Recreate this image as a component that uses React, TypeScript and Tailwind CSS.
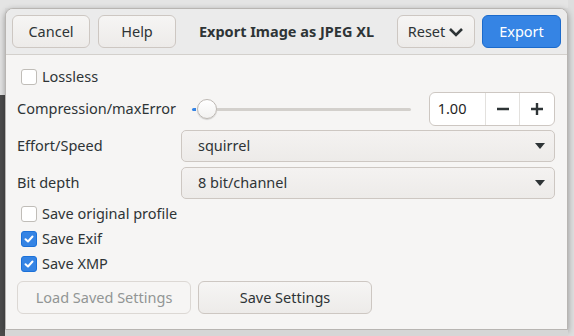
import React from 'react';

const font = { fontFamily: '"Noto Sans", "Open Sans", sans-serif' };

const Check: React.FC<{ checked?: boolean; label: string }> = ({ checked, label }) => (
    <div className="flex items-center h-5 pl-[4px] gap-[5px]">
        {checked ? (
            <span className="w-4 h-4 rounded-[3px] bg-[#3584e4] border border-[#1c71d8] flex items-center justify-center">
                <svg width="12" height="12" viewBox="0 0 12 12">
                    <path d="M2.5 6.2 L5 8.5 L9.5 3.5" fill="none" stroke="#fff" strokeWidth="2" strokeLinecap="round" strokeLinejoin="round" />
                </svg>
            </span>
        ) : (
            <span className="w-4 h-4 rounded-[3px] bg-white border border-[#c0bdb8]" />
        )}
        <span className="text-[#2e3436]">{label}</span>
    </div>
);

const Combo: React.FC<{ value: string }> = ({ value }) => (
    <div className="flex-1 h-8 rounded-[5px] border border-[#cdc7c2] bg-gradient-to-b from-[#f4f2f1] to-[#edebe9] flex items-center justify-between pl-4 pr-[9px]">
        <span className="text-[#2e3436]">{value}</span>
        <svg width="10" height="6" viewBox="0 0 10 6">
            <path d="M0 0 H10 L5 6 Z" fill="#2e3436" />
        </svg>
    </div>
);

const btn = 'h-[33px] rounded-[6px] border border-[#cdc7c2] bg-gradient-to-b from-[#f6f5f4] to-[#edebe9] text-[#2e3436] flex items-center justify-center';

export default function App() {
    return (
        <div className="w-[574px] h-[336px] bg-[#dedede] flex overflow-hidden text-[14.5px]" style={font}>
            <div className="w-[5px] flex flex-col">
                <div className="h-[95px] bg-[#e4e4e4]" />
                <div className="flex-1 bg-[#4c4c4c]" />
            </div>
            <div className="flex flex-col">
                <div className="h-2 bg-[#e4e4e4]" />
                <div className="w-[563px] h-[322px] rounded-t-[8px] border border-[#b8b5b2] bg-[#f6f5f4] shadow-[0_2px_6px_rgba(0,0,0,0.35)] flex flex-col overflow-hidden">
                    <header className="h-[46px] shrink-0 bg-[#ebebeb] border-b border-[#d3d0cc] flex items-center px-[6px]">
                        <button className={`${btn} w-[78px]`}>Cancel</button>
                        <button className={`${btn} w-[78px] ml-2`}>Help</button>
                        <div className="flex-1 text-center font-bold text-[#2e3436]">Export Image as JPEG XL</div>
                        <button className={`${btn} w-[78px] gap-[3px]`}>
                            Reset
                            <svg width="16" height="12" viewBox="0 0 16 12">
                                <path d="M2 3 L8 9 L14 3" fill="none" stroke="#2e3436" strokeWidth="2.6" />
                            </svg>
                        </button>
                        <button className="h-[33px] w-[79px] ml-[7px] rounded-[6px] border border-[#1b6acb] bg-[#3584e4] text-white flex items-center justify-center">
                            Export
                        </button>
                    </header>

                    <div className="flex flex-col pl-[11px] pr-[12px] pt-3">
                        <Check label="Lossless" />

                        <div className="flex items-center h-[34px] mt-[5px]">
                            <span className="w-[177px] text-[#2e3436]">Compression/maxError</span>
                            <div className="flex items-center w-[222px]">
                                <span className="w-[4px] h-[3px] bg-[#3584e4] rounded-l-sm" />
                                <span className="w-5 h-5 rounded-full bg-gradient-to-b from-white to-[#f2f1f0] border border-[#bdb8b3] shadow-[0_1px_1px_rgba(0,0,0,0.15)] ml-px" />
                                <span className="flex-1 h-[3px] bg-[#d3d0cc] rounded-r-sm" />
                            </div>
                            <div className="ml-[18px] w-[128px] h-[34px] rounded-[6px] border border-[#cdc7c2] bg-white flex">
                                <span className="flex-1 flex items-center pl-2 text-[#1e1e1e]">1.00</span>
                                <span className="w-[34px] border-l border-[#e3e1de] flex items-center justify-center">
                                    <svg width="12" height="12" viewBox="0 0 12 12"><path d="M0 6 H12" stroke="#2e3436" strokeWidth="2.4" /></svg>
                                </span>
                                <span className="w-[35px] border-l border-[#e3e1de] flex items-center justify-center">
                                    <svg width="12" height="12" viewBox="0 0 12 12"><path d="M0 6 H12 M6 0 V12" stroke="#2e3436" strokeWidth="2.4" /></svg>
                                </span>
                            </div>
                        </div>

                        <div className="flex items-center mt-1">
                            <span className="w-[164px] text-[#2e3436]">Effort/Speed</span>
                            <Combo value="squirrel" />
                        </div>
                        <div className="flex items-center mt-[5px]">
                            <span className="w-[164px] text-[#2e3436]">Bit depth</span>
                            <Combo value="8 bit/channel" />
                        </div>

                        <div className="mt-[5px] flex flex-col gap-[5px]">
                            <Check label="Save original profile" />
                            <Check checked label="Save Exif" />
                            <Check checked label="Save XMP" />
                        </div>

                        <div className="flex mt-[7px] gap-[7px]">
                            <button className="h-[33px] w-[174px] rounded-[6px] border border-[#dcd8d4] bg-[#f6f5f4] text-[#929595]">Load Saved Settings</button>
                            <button className={`${btn} w-[174px]`}>Save Settings</button>
                        </div>
                    </div>
                </div>
                <div className="flex-1 bg-[#d6d6d6]" />
            </div>
        </div>
    );
}
